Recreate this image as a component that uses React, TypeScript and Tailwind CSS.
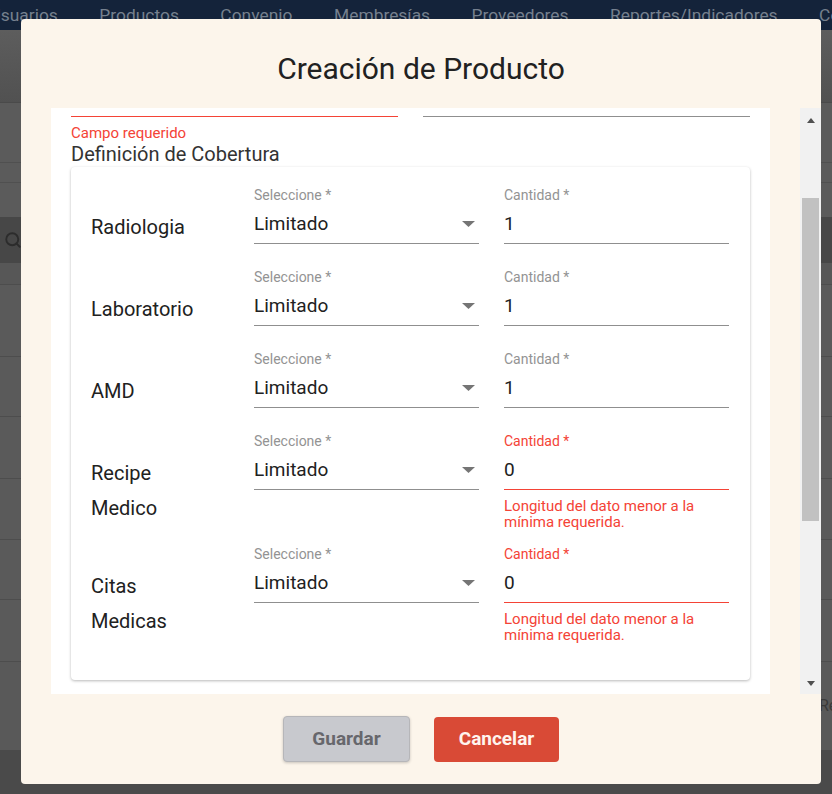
import { Search } from 'lucide-react';

type Row = {
  label: string[];
  value: string;
  error?: boolean;
};

const rows: Row[] = [
  { label: ['Radiologia'], value: '1' },
  { label: ['Laboratorio'], value: '1' },
  { label: ['AMD'], value: '1' },
  { label: ['Recipe', 'Medico'], value: '0', error: true },
  { label: ['Citas', 'Medicas'], value: '0', error: true },
];

const navItems = ['Usuarios', 'Productos', 'Convenio', 'Membresías', 'Proveedores', 'Reportes/Indicadores', 'Configuración'];

function Background() {
  return (
    <div className="flex flex-col h-full">
      <div className="h-[30px] bg-[#14233a] flex items-center gap-[41.5px] whitespace-nowrap overflow-hidden">
        {navItems.map((n, i) => (
          <span key={n} className={`text-[17.4px] text-[#76808e] ${i === 0 ? '-ml-[10.5px]' : ''}`}>
            {n}
          </span>
        ))}
      </div>
      <div className="h-[73px] bg-gradient-to-b from-[#5d5d5d] to-[#515151] border-b border-[#4a4a4a]" />
      <div className="h-[60px] bg-[#5b5b5b] border-b border-[#505050]" />
      <div className="h-[20px] bg-[#5b5b5b] border-b border-[#505050]" />
      <div className="h-[34px] bg-[#5b5b5b]" />
      <div className="h-[46px] bg-[#474747] flex items-center pl-[4px]">
        <Search size={18} strokeWidth={2.5} className="text-[#2c2c2c]" />
      </div>
      <div className="h-[22px] bg-[#575757] border-b border-[#4d4d4d]" />
      <div className="h-[72px] bg-[#5a5a5a] border-b border-[#4d4d4d]" />
      <div className="h-[60px] bg-[#5a5a5a] border-b border-[#4d4d4d]" />
      <div className="h-[62px] bg-[#5a5a5a] border-b border-[#4d4d4d]" />
      <div className="h-[61px] bg-[#5a5a5a] border-b border-[#4d4d4d]" />
      <div className="h-[60px] bg-[#5a5a5a] border-b border-[#4d4d4d]" />
      <div className="h-[62px] bg-[#5a5a5a] border-b border-[#4d4d4d]" />
      <div className="h-[88px] bg-[#595959] flex items-center pl-[819px] whitespace-nowrap overflow-hidden">
        <span className="text-[16px] text-[#3a3a3a]">Registros</span>
      </div>
      <div className="flex-1 bg-[#4a4a4a]" />
    </div>
  );
}

function Field({ label, value, select, error }: { label: string; value: string; select?: boolean; error?: boolean }) {
  return (
    <div className="w-[225px]">
      <div className={`h-[16px] text-[14px] leading-[16px] ${error ? 'text-[#f44336]' : 'text-[#939393]'}`}>{label}</div>
      <div
        className={`h-[41px] pt-[2px] flex items-center justify-between border-b ${error ? 'border-[#f44336]' : 'border-[#8f8f8f]'}`}
      >
        <span className="text-[19px] leading-[24px] text-[#212121]">{value}</span>
        {select && (
          <svg width="13" height="6" viewBox="0 0 13 6" className="mr-[4px]">
            <path d="M0 0 L13 0 L6.5 6 Z" fill="#757575" />
          </svg>
        )}
      </div>
      {error && (
        <div className="mt-[8px] text-[15px] leading-[16px] text-[#f44336]">
          Longitud del dato menor a la mínima requerida.
        </div>
      )}
    </div>
  );
}

function Scrollbar() {
  return (
    <div className="w-[21px] bg-[#f1f1f1] flex flex-col">
      <div className="h-[24px] flex items-center justify-center">
        <svg width="8" height="5" viewBox="0 0 8 5">
          <path d="M0 5 L4 0 L8 5 Z" fill="#505050" />
        </svg>
      </div>
      <div className="mt-[66px] h-[323px] mx-[2px] bg-[#c1c1c1]" />
      <div className="flex-1" />
      <div className="h-[22px] flex items-center justify-center">
        <svg width="8" height="5" viewBox="0 0 8 5">
          <path d="M0 0 L8 0 L4 5 Z" fill="#505050" />
        </svg>
      </div>
    </div>
  );
}

export default function App() {
  return (
    <div className="relative w-[832px] h-[794px] overflow-hidden bg-[#5a5a5a] font-['Roboto',sans-serif]">
      <Background />

      <div className="absolute left-[21px] top-[19px] w-[800px] h-[765px] rounded-[4px] bg-[#fcf5eb] flex flex-col">
        <div className="h-[89px] pt-[11px] flex items-center justify-center">
          <h2 className="text-[30px] leading-[36px] text-[#212121]">Creación de Producto</h2>
        </div>

        <div className="h-[586px] flex pl-[30px]">
          <div className="w-[719px] h-full bg-white overflow-hidden px-[20px] pt-[8px]">
            <div className="flex gap-[25px]">
              <div className="w-[327px] border-b border-[#f44336]" />
              <div className="w-[327px] border-b border-[#8f8f8f]" />
            </div>
            <div className="mt-[7px] text-[15px] leading-[18px] text-[#f44336]">Campo requerido</div>
            <div className="text-[20px] leading-[24px] text-[#333333]">Definición de Cobertura</div>

            <div className="mt-[1px] rounded-[4px] bg-white shadow-[0_1px_3px_rgba(0,0,0,0.28)] pt-[20px] pl-[20px] pr-[21px] pb-[21px]">
              {rows.map((r) => (
                <div key={r.label.join(' ')} className={`flex items-start ${r.error ? 'mb-[16px]' : 'mb-[25px]'} last:mb-[16px]`}>
                  <div className="w-[163px] h-[57px] pt-[23px] text-[20px] leading-[35px] text-[#212121]">
                    {r.label.map((l) => (
                      <div key={l}>{l}</div>
                    ))}
                  </div>
                  <Field label="Seleccione *" value="Limitado" select />
                  <div className="ml-[25px]">
                    <Field label="Cantidad *" value={r.value} error={r.error} />
                  </div>
                </div>
              ))}
            </div>
          </div>
          <div className="w-[30px]" />
          <Scrollbar />
        </div>

        <div className="flex-1 flex items-center justify-center gap-[24px]">
          <button className="w-[127px] h-[46px] rounded-[4px] bg-[#c8c9ce] border border-[#b6b6b9] shadow-[0_1px_3px_rgba(0,0,0,0.2)] text-[19px] font-bold text-[#67676c]">
            Guardar
          </button>
          <button className="w-[125px] h-[45px] rounded-[4px] bg-[#d94a36] text-[19px] font-bold text-[#fff4ee]">
            Cancelar
          </button>
        </div>
      </div>
    </div>
  );
}
